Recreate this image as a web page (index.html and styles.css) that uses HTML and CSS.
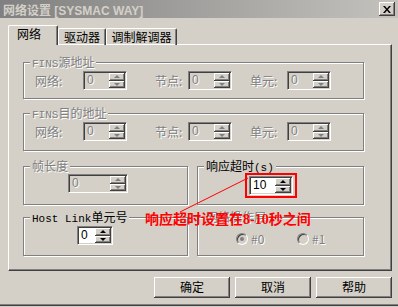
FILE: index.html
```html
<html>
<head>
<title>网络设置</title>
<meta http-equiv="Content-Type" content="text/html; charset=utf-8"/>
<link rel="stylesheet" href="styles.css">
</head>
<body>
<div class="window">
  <div class="titlebar">
    <span class="title">网络设置 [SYSMAC WAY]</span>
    <span class="close">
      <svg width="8" height="7" viewBox="0 0 8 7"><path d="M0 0h2l2 2.5 2-2.5h2l-3 3.5 3 3.5h-2l-2-2.5-2 2.5h-2l3-3.5z" fill="#000"/></svg>
    </span>
  </div>

  <div class="tabs">
    <div class="tab active">网络</div>
    <div class="tab t2">驱动器</div>
    <div class="tab t3">调制解调器</div>
  </div>

  <div class="panel">
    <div class="group">
      <div class="legend off"><span class="lat">FINS</span>源地址</div>
      <div class="fields">
        <div class="field"><span class="lbl l1 off">网络:</span><span class="spin off w44"><span class="val">0</span><span class="arrows"><i class="up"></i><i class="down"></i></span></span></div>
        <div class="field"><span class="lbl l2 off">节点:</span><span class="spin off w44"><span class="val">0</span><span class="arrows"><i class="up"></i><i class="down"></i></span></span></div>
        <div class="field"><span class="lbl l3 off">单元:</span><span class="spin off w44"><span class="val">0</span><span class="arrows"><i class="up"></i><i class="down"></i></span></span></div>
      </div>
    </div>

    <div class="group g2">
      <div class="legend off"><span class="lat">FINS</span>目的地址</div>
      <div class="fields">
        <div class="field"><span class="lbl l1 off">网络:</span><span class="spin off w44"><span class="val">0</span><span class="arrows"><i class="up"></i><i class="down"></i></span></span></div>
        <div class="field"><span class="lbl l2 off">节点:</span><span class="spin off w44"><span class="val">0</span><span class="arrows"><i class="up"></i><i class="down"></i></span></span></div>
        <div class="field"><span class="lbl l3 off">单元:</span><span class="spin off w44"><span class="val">0</span><span class="arrows"><i class="up"></i><i class="down"></i></span></span></div>
      </div>
    </div>

    <div class="row r3">
      <div class="group tall">
        <div class="legend off">帧长度</div>
        <span class="spin off w60 frame"><span class="val">0</span><span class="arrows"><i class="up"></i><i class="down"></i></span></span>
      </div>
      <div class="group tall">
        <div class="legend">响应超时<span class="lat">(s)</span></div>
        <span class="mark">
          <span class="spin w44"><span class="val">10</span><span class="arrows on"><i class="up"></i><i class="down"></i></span></span>
        </span>
      </div>
    </div>

    <div class="row r4">
      <div class="group">
        <div class="legend"><span class="lat">Host Link</span>单元号</div>
        <span class="spin w36 unit"><span class="val">0</span><span class="arrows on"><i class="up"></i><i class="down"></i></span></span>
      </div>
      <div class="group">
        <div class="legend off">网络操作层</div>
        <div class="radios">
          <span class="radio"><b class="dot checked"></b><span class="off">#0</span></span>
          <span class="radio"><b class="dot"></b><span class="off">#1</span></span>
        </div>
      </div>
    </div>

    <svg class="pointer" width="382" height="224"><line x1="171" y1="167" x2="239" y2="133" stroke="#f00" stroke-width="1"/></svg>
    <div class="note">响应超时设置在<span class="num">8-10</span>秒之间</div>
  </div>

  <div class="buttons">
    <div class="btn">确定</div>
    <div class="btn">取消</div>
    <div class="btn">帮助</div>
  </div>
</div>
</body>
</html>
```

FILE: styles.css
```css
body {
    margin:0;
    background:#d4d0c8;
    font:12px "Noto Sans CJK SC", "Liberation Sans", sans-serif;
    color:#000;
}
.window {
    width:398px;
    height:306px;
    box-sizing:border-box;
    border-bottom:1px solid #404040;
    box-shadow:inset 0 -1px #808080;
}
.titlebar {
    height:18px;
    display:flex;
    align-items:center;
    justify-content:space-between;
    padding:0 3px 0 3px;
    background:linear-gradient(to right, #808080, #c4c2bd);
}
.title {
    font:bold 12px "Liberation Sans", "Noto Sans CJK SC", sans-serif;
    color:#d4d0c8;
}
.close {
    width:16px;
    height:14px;
    box-sizing:border-box;
    background:#d4d0c8;
    box-shadow:inset -1px -1px #404040, inset 1px 1px #fff, inset -2px -2px #808080;
    display:flex;
    align-items:center;
    justify-content:center;
}

/* tabs */
.tabs {
    display:flex;
    align-items:flex-end;
    height:20px;
    margin:7px 0 -1px;
    padding-left:8px;
    position:relative;
    z-index:1;
}
.tab {
    height:17px;
    line-height:15px;
    box-sizing:border-box;
    border:1px solid #fff;
    border-right-color:#404040;
    border-bottom:0;
    border-radius:2px 2px 0 0;
    box-shadow:inset -1px 0 #808080;
    text-align:center;
}
.tab.active {
    width:50px;
    height:20px;
    line-height:16px;
    text-align:left;
    padding-left:8px;
    background:#d4d0c8;
}
.t2 { width:48px; }
.t3 { width:71px; }

/* panel */
.panel {
    position:relative;
    margin-left:8px;
    width:384px;
    height:227px;
    box-sizing:border-box;
    border:1px solid #fff;
    border-right-color:#404040;
    border-bottom-color:#404040;
    box-shadow:inset -1px -1px #808080;
    padding:17px 0 0 14px;
}
.group {
    width:341px;
    box-sizing:border-box;
    border:1px solid #808080;
    box-shadow:1px 1px #fff, inset 1px 1px #fff;
    padding:0 11px 8px;
    margin-bottom:14px;
}
.g2 { padding-bottom:9px; margin-bottom:15px; }
.legend {
    display:table;
    margin:-8px 0 1px -5px;
    padding:0 2px;
    line-height:14px;
    background:#d4d0c8;
}
.lat {
    font:11px "Liberation Mono", monospace;
}
.off {
    color:#808080;
    text-shadow:1px 1px #fff;
}
.fields {
    display:grid;
    grid-template-columns:120px 95px auto;
}
.field {
    display:flex;
    align-items:center;
}
.lbl.l1 { width:48px; }
.lbl.l2 { width:33px; }
.lbl.l3 { width:37px; }

.row {
    display:grid;
    grid-template-columns:165px 167px;
    column-gap:9px;
    width:341px;
}
.row .group { width:auto; }
.r3 { margin-bottom:12px; }
.r3 .group { margin-bottom:0; }
.r4 .group { margin-bottom:0; }
.tall { padding-bottom:9px; }

/* spin boxes */
.spin {
    display:flex;
    height:19px;
    box-sizing:border-box;
    border:1px solid;
    border-color:#808080 #fff #fff #808080;
    box-shadow:inset 1px 1px #404040, inset -1px -1px #d4d0c8;
    padding:1px;
    background:#fff;
}
.spin.off { background:#d4d0c8; }
.w44 { width:44px; }
.w60 { width:60px; }
.w36 { width:36px; }
.frame { margin:1px 0 0 33px; }
.unit { margin-left:42px; }
.val {
    flex:1;
    padding-left:2px;
    line-height:15px;
    font:12px "Liberation Sans", sans-serif;
}
.arrows {
    width:16px;
    display:flex;
    flex-direction:column;
}
.arrows i {
    flex:1;
    display:flex;
    align-items:center;
    justify-content:center;
    background:#d4d0c8;
    box-shadow:inset -1px -1px #404040, inset 1px 1px #fff, inset -2px -2px #808080;
}
.arrows i::after {
    content:"";
    border-left:3px solid transparent;
    border-right:3px solid transparent;
}
.arrows .up::after { border-bottom:3px solid #808080; }
.arrows .down::after { border-top:3px solid #808080; }
.arrows.on .up::after { border-bottom-color:#000; }
.arrows.on .down::after { border-top-color:#000; }

.mark {
    display:inline-block;
    border:2px solid #f00;
    padding:1px 2px;
    margin:-2px 0 -3px 36px;
}

/* radios */
.radios {
    display:grid;
    grid-template-columns:61px auto;
    padding:5px 0 0 27px;
}
.radio {
    display:flex;
    align-items:center;
    gap:3px;
}
.dot {
    width:12px;
    height:12px;
    box-sizing:border-box;
    border-radius:50%;
    border:1px solid;
    border-color:#808080 #fff #fff #808080;
    box-shadow:inset 1px 1px #404040;
    background:#d4d0c8;
    display:flex;
    align-items:center;
    justify-content:center;
}
.dot.checked::after {
    content:"";
    width:4px;
    height:4px;
    border-radius:50%;
    background:#808080;
}

/* annotation drawn over the dialog */
.pointer {
    position:absolute;
    left:0;
    top:0;
}
.note {
    position:absolute;
    left:136px;
    top:165px;
    font:bold 14px "Noto Sans CJK SC", sans-serif;
    line-height:16px;
    color:#f00;
    white-space:nowrap;
}
.num { font:bold 14px "Liberation Serif", serif; }

/* buttons */
.buttons {
    display:flex;
    justify-content:flex-end;
    gap:5px;
    margin-top:6px;
    padding-right:6px;
}
.btn {
    width:76px;
    height:21px;
    line-height:20px;
    box-sizing:border-box;
    text-align:center;
    box-shadow:inset -1px -1px #404040, inset 1px 1px #fff, inset -2px -2px #808080;
}
```
